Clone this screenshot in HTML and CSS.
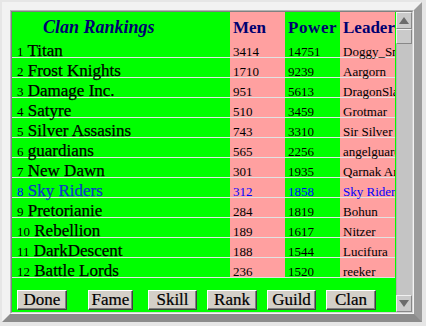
FILE: index.html
```html
<!DOCTYPE html>
<html>
<head>
<meta charset="utf-8">
<title>Clan Rankings</title>
<link rel="stylesheet" href="styles.css">
</head>
<body>
<div class="window">
  <div class="bevel">
    <div class="inner">
      <div class="pane">
        <table class="rank">
          <colgroup>
            <col class="c-name"><col class="c-num"><col class="c-num"><col class="c-num">
          </colgroup>
          <thead>
            <tr>
              <th class="title">Clan Rankings</th>
              <th class="pink">Men</th>
              <th class="wide">Power</th>
              <th class="pink">Leader</th>
            </tr>
          </thead>
          <tbody>
            <tr><td class="name"><span class="pos">1</span> Titan</td><td class="pink">3414</td><td>14751</td><td class="pink lead">Doggy_Snow</td></tr>
            <tr><td class="name"><span class="pos">2</span> Frost Knights</td><td class="pink">1710</td><td>9239</td><td class="pink lead">Aargorn</td></tr>
            <tr><td class="name"><span class="pos">3</span> Damage Inc.</td><td class="pink">951</td><td>5613</td><td class="pink lead">DragonSlayer</td></tr>
            <tr><td class="name"><span class="pos">4</span> Satyre</td><td class="pink">510</td><td>3459</td><td class="pink lead">Grotmar</td></tr>
            <tr><td class="name"><span class="pos">5</span> Silver Assasins</td><td class="pink">743</td><td>3310</td><td class="pink lead">Sir Silver</td></tr>
            <tr><td class="name"><span class="pos">6</span> guardians</td><td class="pink">565</td><td>2256</td><td class="pink lead">angelguard</td></tr>
            <tr><td class="name"><span class="pos">7</span> New Dawn</td><td class="pink">301</td><td>1935</td><td class="pink lead">Qarnak Ar</td></tr>
            <tr class="own"><td class="name"><span class="pos">8</span> Sky Riders</td><td class="pink">312</td><td>1858</td><td class="pink lead">Sky Riders</td></tr>
            <tr><td class="name"><span class="pos">9</span> Pretorianie</td><td class="pink">284</td><td>1819</td><td class="pink lead">Bohun</td></tr>
            <tr><td class="name"><span class="pos">10</span> Rebellion</td><td class="pink">189</td><td>1617</td><td class="pink lead">Nitzer</td></tr>
            <tr><td class="name"><span class="pos">11</span> DarkDescent</td><td class="pink">188</td><td>1544</td><td class="pink lead">Lucifura</td></tr>
            <tr><td class="name"><span class="pos">12</span> Battle Lords</td><td class="pink">236</td><td>1520</td><td class="pink lead">reeker</td></tr>
          </tbody>
        </table>
        <div class="actions">
          <button class="btn w50">Done</button>
          <button class="btn w45 gap-l">Fame</button>
          <button class="btn w49 gap-s">Skill</button>
          <button class="btn w50">Rank</button>
          <button class="btn w49">Guild</button>
          <button class="btn w50">Clan</button>
        </div>
      </div>
      <div class="scrollbar">
        <div class="sb-btn">
          <svg width="10" height="7" viewBox="0 0 10 7"><polygon points="5,0 10,7 0,7" fill="#6b6b6b"/></svg>
        </div>
        <div class="sb-thumb"></div>
        <div class="sb-track"></div>
        <div class="sb-btn">
          <svg width="10" height="7" viewBox="0 0 10 7"><polygon points="0,0 10,0 5,7" fill="#6b6b6b"/></svg>
        </div>
      </div>
    </div>
  </div>
</div>
</body>
</html>
```

FILE: styles.css
```css
html, body {
  margin: 0;
  padding: 0;
}
body {
  background: #e6e6e6;
  font-family: "Liberation Serif", "Times New Roman", serif;
  color: #000;
}
.window {
  margin: 2px;
  width: 420px;
  height: 320px;
  box-sizing: border-box;
  border: 8px solid;
  border-color: #f2f2f2 #9c9c9c #8c8c8c #f2f2f2;
}
.bevel {
  height: 100%;
  box-sizing: border-box;
  border: 1px solid;
  border-color: #b4b4b4 #f4f4f4 #f4f4f4 #b4b4b4;
}
.inner {
  height: 100%;
  box-sizing: border-box;
  border: 1px solid;
  border-color: #808080 #d4d4d4 #d4d4d4 #808080;
  display: flex;
}
.pane {
  width: 384px;
  background: #00ff00;
  overflow: hidden;
}
.rank {
  width: 383px;
  table-layout: fixed;
  border-collapse: separate;
  border-spacing: 0;
}
.c-name { width: 218px; }
.c-num { width: 55px; }
.pink { background: #ffa0a0; }
th {
  height: 24px;
  padding: 0 0 2px 3px;
  text-align: left;
  vertical-align: bottom;
  white-space: nowrap;
  font-size: 17px;
  line-height: 17px;
  font-weight: bold;
  color: #000070;
}
th.wide { letter-spacing: 0.6px; }
th.title {
  padding-left: 31px;
  font-size: 18px;
  font-style: italic;
}
td {
  height: 19px;
  padding: 0 0 0 3px;
  border-bottom: 1px solid #e2e2e2;
  vertical-align: bottom;
  white-space: nowrap;
  font-size: 13px;
  line-height: 11px;
}
td.name {
  padding-left: 5px;
  font-size: 17px;
  line-height: 13px;
  -webkit-text-stroke: 0.25px #000;
}
.pos {
  font-size: 13px;
  line-height: 9px;
  -webkit-text-stroke: 0;
}
.lead {
  overflow-x: clip;
  overflow-y: visible;
}
.own td { color: #0000ff; }
.own td.name {
  color: #1034c8;
  -webkit-text-stroke: 0.25px #1034c8;
}
.own td.name .pos { color: #0000ff; -webkit-text-stroke: 0; }
.actions {
  display: flex;
  gap: 10px;
  padding: 12px 0 0 5px;
}
.btn {
  height: 20px;
  box-sizing: border-box;
  padding: 0;
  margin: 0;
  font-family: "Liberation Serif", "Times New Roman", serif;
  font-size: 17px;
  line-height: 16px;
  color: #000;
  background: #d4d0c8;
  border: 1px solid;
  border-color: #ffffff #404040 #404040 #ffffff;
  box-shadow: inset -1px -1px #808080;
  text-align: center;
  -webkit-text-stroke: 0.2px #000;
}
.w45 { width: 45px; }
.w49 { width: 49px; }
.w50 { width: 50px; }
.gap-l { margin-left: 11px; }
.gap-s { margin-left: 5px; }
.scrollbar {
  width: 16px;
  display: flex;
  flex-direction: column;
  background: #c4c4c4;
}
.sb-btn, .sb-thumb {
  box-sizing: border-box;
  border: 1px solid;
  border-color: #f0f0f0 #888888 #888888 #f0f0f0;
  background: #cacaca;
}
.sb-btn {
  height: 17px;
  display: flex;
  align-items: center;
  justify-content: center;
}
.sb-btn svg { display: block; }
.sb-thumb { height: 15px; }
.sb-track {
  flex: 1;
  border-left: 1px solid #b0b0b0;
}
```
